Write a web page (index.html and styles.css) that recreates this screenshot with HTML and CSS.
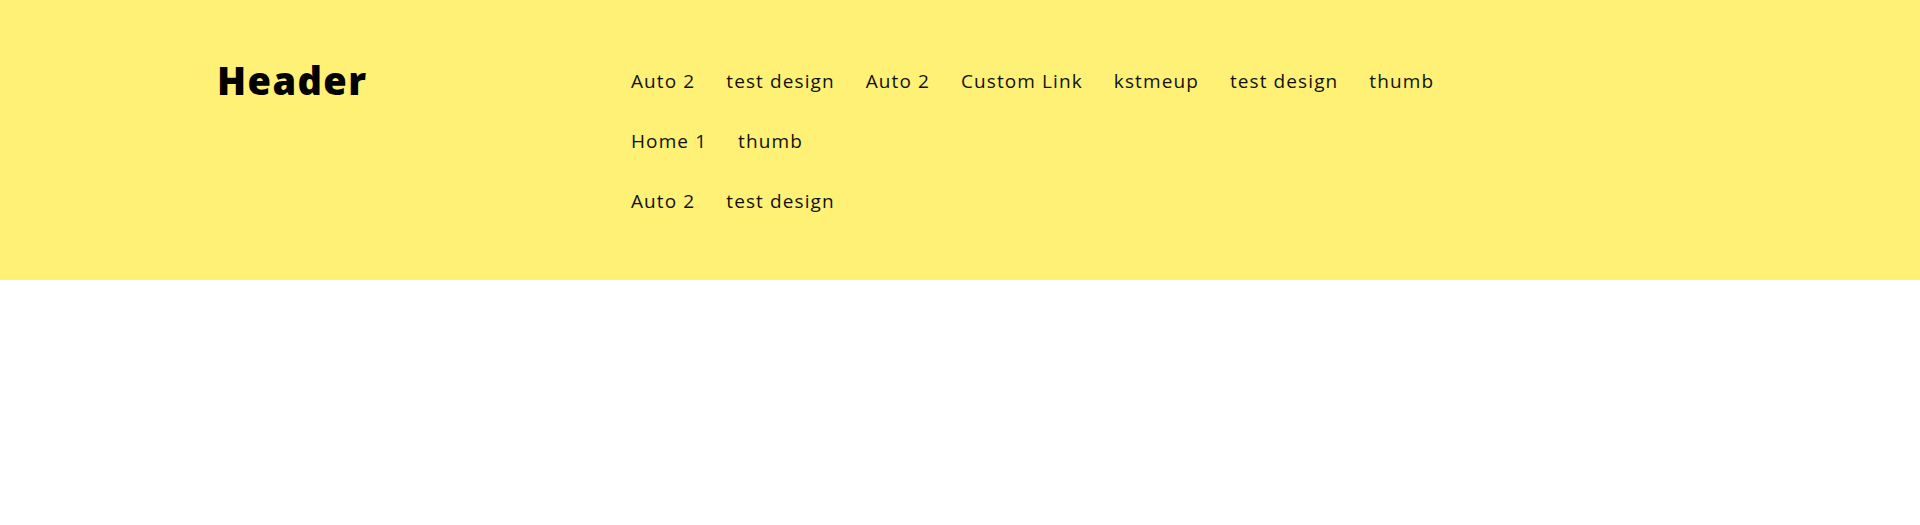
FILE: index.html
```html
<!DOCTYPE html>
<html lang="en">
<head>
<meta charset="utf-8">
<title>Header</title>
<link rel="stylesheet" href="styles.css">
</head>
<body>
<header class="site-header">
  <div class="header-inner">
    <div class="brand">Header</div>
    <nav class="nav">
      <ul class="nav-row">
        <li><a href="#">Auto 2</a></li>
        <li><a href="#">test design</a></li>
        <li><a href="#">Auto 2</a></li>
        <li><a href="#">Custom Link</a></li>
        <li><a href="#">kstmeup</a></li>
        <li><a href="#">test design</a></li>
        <li><a href="#">thumb</a></li>
      </ul>
      <ul class="nav-row">
        <li><a href="#">Home 1</a></li>
        <li><a href="#">thumb</a></li>
      </ul>
      <ul class="nav-row">
        <li><a href="#">Auto 2</a></li>
        <li><a href="#">test design</a></li>
      </ul>
    </nav>
  </div>
</header>
</body>
</html>
```

FILE: styles.css
```css
html, body {
  margin: 0;
  padding: 0;
  background: #ffffff;
}

body {
  font-family: "Open Sans", "Noto Sans", sans-serif;
  color: #111111;
}

.site-header {
  background: #fff176;
  height: 280px;
  box-sizing: border-box;
  padding-top: 60px;
}

.header-inner {
  display: flex;
  align-items: flex-start;
  padding-left: 217px;
}

.brand {
  width: 414px;
  flex: none;
  font-family: "Open Sans", sans-serif;
  font-weight: 800;
  font-size: 38px;
  line-height: 40px;
  color: #000000;
  letter-spacing: 1.4px;
}

.nav {
  display: flex;
  flex-direction: column;
  gap: 30px;
  padding-top: 6px;
}

.nav-row {
  list-style: none;
  margin: 0;
  padding: 0;
  display: flex;
  gap: 31px;
}

.nav-row a {
  display: block;
  font-size: 19px;
  line-height: 30px;
  color: #111111;
  text-decoration: none;
  letter-spacing: 1.1px;
}
```
